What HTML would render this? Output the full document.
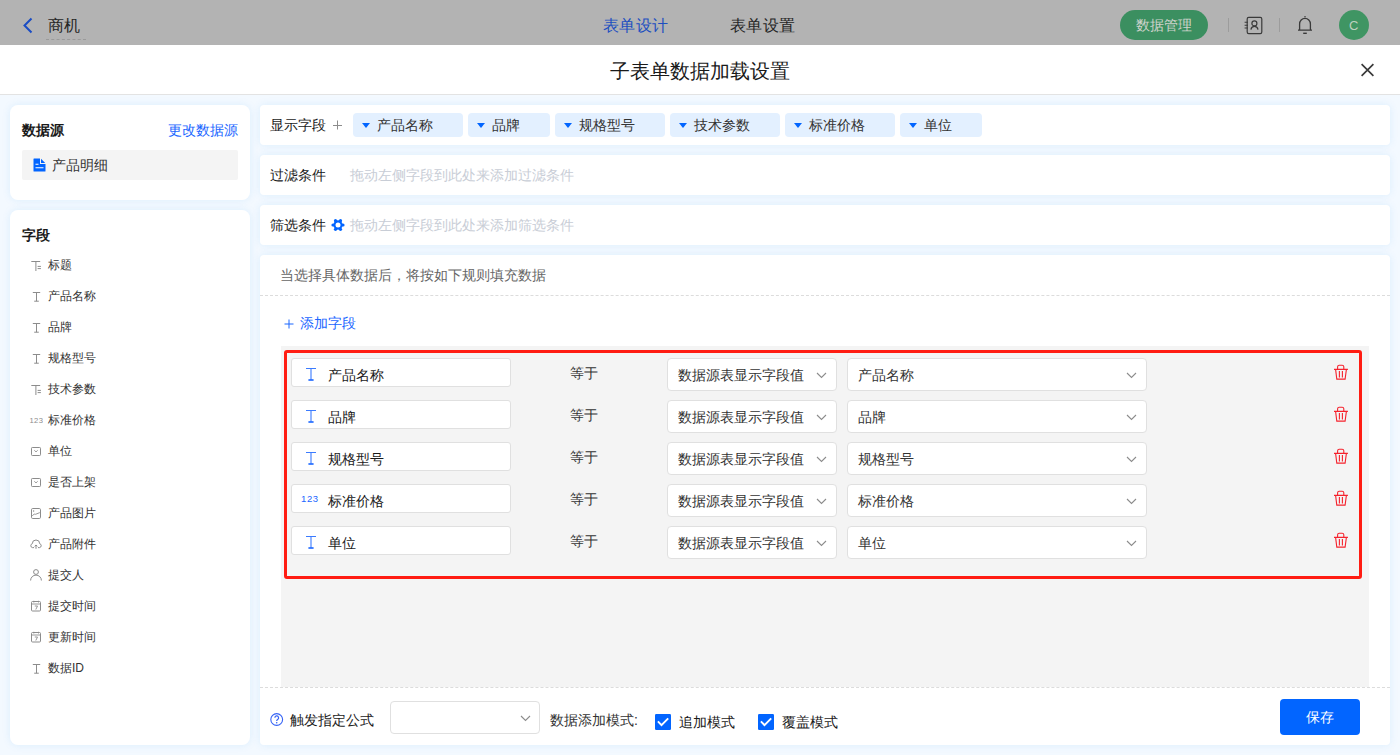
<!DOCTYPE html>
<html><head><meta charset="utf-8">
<style>
*{box-sizing:border-box;margin:0;padding:0}
html,body{width:1400px;height:755px;overflow:hidden;background:#f3f9ff;font-family:"Liberation Sans",sans-serif;color:#333;font-size:14px}
.abs{position:absolute}
.t{position:absolute;white-space:nowrap;line-height:1}
/* header */
#hdr{position:absolute;left:0;top:0;width:1400px;height:45px;background:#b3b3b3}
#mhdr{position:absolute;left:0;top:45px;width:1400px;height:50px;background:#fff;border-bottom:1px solid #e3e3e3}
.card{position:absolute;background:#fff;border-radius:8px;box-shadow:0 0 8px rgba(20,140,240,0.10)}
.rcard{position:absolute;background:#fff;border-radius:4px;box-shadow:0 0 8px rgba(20,140,240,0.10)}
.fi{position:absolute;left:0;height:20px;width:220px}
.fi svg{position:absolute;left:0;top:0}
.fi span{position:absolute;left:16px;top:4px;font-size:12px;line-height:12px;color:#333}
.tag{position:absolute;top:113px;height:24px;background:#e3f0ff;border-radius:4px}
.tag i{position:absolute;left:8.5px;top:10px;width:0;height:0;border-left:4px solid transparent;border-right:4px solid transparent;border-top:5px solid #0265ff}
.tag span{position:absolute;left:24px;top:5px;font-size:14px;line-height:14px;color:#333}
.inp{position:absolute;left:291px;width:220px;height:29px;background:#fff;border:1px solid #e0e0e0;border-radius:3px}
.sel{position:absolute;height:33px;background:#fff;border:1px solid #e0e0e0;border-radius:4px}
.sel span{position:absolute;left:10px;top:9px;font-size:14px;line-height:14px;color:#333}
.sel svg{position:absolute;top:13px}
.eq{position:absolute;left:570px;font-size:14px;line-height:14px;color:#333}
</style></head><body>
<div id="hdr">
  <svg class="abs" style="left:22px;top:17px" width="12" height="17" viewBox="0 0 12 17"><path d="M9.5 1.5 L2.5 8.5 L9.5 15.5" fill="none" stroke="#1a4cc4" stroke-width="2"/></svg>
  <div class="t" style="left:48px;top:18px;font-size:16px;color:#262626">商机</div>
  <div class="abs" style="left:46px;top:39px;width:40px;border-top:1px dashed #9a9a9a"></div>
  <div class="t" style="left:603px;top:18px;font-size:16px;letter-spacing:0.4px;color:#1d4fc0">表单设计</div>
  <div class="t" style="left:730px;top:18px;font-size:16px;letter-spacing:0.4px;color:#262626">表单设置</div>
  <div class="abs" style="left:1120px;top:10px;width:88px;height:30px;border-radius:15px;background:#3b8f60"></div>
  <div class="t" style="left:1136px;top:18px;font-size:14px;color:#cfd3cc">数据管理</div>
  <div class="abs" style="left:1228px;top:18px;width:1px;height:14px;background:#9c9c9c"></div>
  <div class="abs" style="left:1279px;top:18px;width:1px;height:14px;background:#9c9c9c"></div>
  <svg class="abs" style="left:1244px;top:16px" width="20" height="19" viewBox="0 0 20 19"><rect x="3.2" y="1.4" width="14.6" height="16.2" rx="1.6" stroke="#3a3a3a" stroke-width="1.2" fill="none"/><path d="M0.6 6.3H4M0.6 9.2H4M0.6 12H4" stroke="#3a3a3a" stroke-width="1.1"/><circle cx="10.4" cy="7.4" r="2.5" stroke="#3a3a3a" stroke-width="1.2" fill="none"/><path d="M6.9 13.6A3.6 3.8 0 0 1 14 13.6" stroke="#3a3a3a" stroke-width="1.2" fill="none"/></svg>
  <svg class="abs" style="left:1296px;top:15px" width="18" height="20" viewBox="0 0 18 20"><path d="M9 1.3V2.3" stroke="#3a3a3a" stroke-width="1.6"/><path d="M2 15.2H16M3.6 15.2V9A5.4 5.6 0 0 1 14.4 9V15.2" stroke="#3a3a3a" stroke-width="1.3" fill="none"/><path d="M7.2 18.3H10.8" stroke="#3a3a3a" stroke-width="1.4"/></svg>
  <div class="abs" style="left:1339px;top:10px;width:30px;height:30px;border-radius:15px;background:#3f9563"></div>
  <div class="t" style="left:1349px;top:19px;font-size:13px;color:#bcd0bf">C</div>
</div>
<div id="mhdr">
  <div class="t" style="left:610px;top:16px;font-size:20px;color:#1a1a1a">子表单数据加载设置</div>
  
</div>
<svg class="abs" style="left:1360px;top:63px" width="15" height="14" viewBox="0 0 15 14"><path d="M1.6 1.2 L13.4 12.8 M13.4 1.2 L1.6 12.8" stroke="#3a3a3a" stroke-width="1.7" fill="none"/></svg>

<!-- left cards -->
<div class="card" style="left:10px;top:105px;width:240px;height:95px"></div>
<div class="t" style="left:22px;top:123px;font-size:14px;font-weight:bold;color:#1a1a1a">数据源</div>
<div class="t" style="left:168px;top:123px;font-size:14px;color:#1a66ff">更改数据源</div>
<div class="abs" style="left:22px;top:150px;width:216px;height:30px;background:#f4f4f4;border-radius:2px"></div>
<div class="t" style="left:52px;top:158px;font-size:14px;color:#333">产品明细</div>

<div class="card" style="left:10px;top:210px;width:240px;height:535px"></div>
<div class="t" style="left:22px;top:228px;font-size:14px;font-weight:bold;color:#1a1a1a">字段</div>
<!--FIELDS-->
<svg class="abs" style="left:29px;top:258px" width="14" height="14" viewBox="0 0 14 14"><path d="M2.3 3.5H11.2M6.9 3.5V13M8.6 8.4H11.9M8.6 10.6H11.9" stroke="#8c8c8c" stroke-width="1" fill="none"/></svg>
<div class="t" style="left:48px;top:259px;font-size:12px;color:#333">标题</div>
<svg class="abs" style="left:29px;top:289px" width="14" height="14" viewBox="0 0 14 14"><path d="M3.8 3.5H11.2M7.5 3.5V12.2M5.2 12.2H9.8" stroke="#8c8c8c" stroke-width="1" fill="none"/></svg>
<div class="t" style="left:48px;top:290px;font-size:12px;color:#333">产品名称</div>
<svg class="abs" style="left:29px;top:320px" width="14" height="14" viewBox="0 0 14 14"><path d="M3.8 3.5H11.2M7.5 3.5V12.2M5.2 12.2H9.8" stroke="#8c8c8c" stroke-width="1" fill="none"/></svg>
<div class="t" style="left:48px;top:321px;font-size:12px;color:#333">品牌</div>
<svg class="abs" style="left:29px;top:351px" width="14" height="14" viewBox="0 0 14 14"><path d="M3.8 3.5H11.2M7.5 3.5V12.2M5.2 12.2H9.8" stroke="#8c8c8c" stroke-width="1" fill="none"/></svg>
<div class="t" style="left:48px;top:352px;font-size:12px;color:#333">规格型号</div>
<svg class="abs" style="left:29px;top:382px" width="14" height="14" viewBox="0 0 14 14"><path d="M2.3 3.5H11.2M6.9 3.5V13M8.6 8.4H11.9M8.6 10.6H11.9" stroke="#8c8c8c" stroke-width="1" fill="none"/></svg>
<div class="t" style="left:48px;top:383px;font-size:12px;color:#333">技术参数</div>
<svg class="abs" style="left:29px;top:413px" width="14" height="14" viewBox="0 0 14 14"><text x="0.6" y="10" font-size="7.6" font-family="Liberation Sans" fill="#8c8c8c" letter-spacing="0.3">123</text></svg>
<div class="t" style="left:48px;top:414px;font-size:12px;color:#333">标准价格</div>
<svg class="abs" style="left:29px;top:444px" width="14" height="14" viewBox="0 0 14 14"><rect x="2.5" y="3.5" width="9" height="8" rx="0.8" stroke="#8c8c8c" stroke-width="1" fill="none"/><path d="M5.3 6.3L7 7.9 8.7 6.3" stroke="#8c8c8c" stroke-width="0.9" fill="none"/></svg>
<div class="t" style="left:48px;top:445px;font-size:12px;color:#333">单位</div>
<svg class="abs" style="left:29px;top:475px" width="14" height="14" viewBox="0 0 14 14"><rect x="2.5" y="3.5" width="9" height="8" rx="0.8" stroke="#8c8c8c" stroke-width="1" fill="none"/><path d="M5.3 6.3L7 7.9 8.7 6.3" stroke="#8c8c8c" stroke-width="0.9" fill="none"/></svg>
<div class="t" style="left:48px;top:476px;font-size:12px;color:#333">是否上架</div>
<svg class="abs" style="left:29px;top:506px" width="14" height="14" viewBox="0 0 14 14"><rect x="2.5" y="2.5" width="9" height="10" rx="1.2" stroke="#8c8c8c" stroke-width="1" fill="none"/><path d="M3.2 10L5.2 8 6.6 8.3 10.8 6.6" stroke="#8c8c8c" stroke-width="0.9" fill="none"/><circle cx="4.6" cy="5" r="0.7" fill="#8c8c8c"/></svg>
<div class="t" style="left:48px;top:507px;font-size:12px;color:#333">产品图片</div>
<svg class="abs" style="left:29px;top:537px" width="14" height="14" viewBox="0 0 14 14"><path d="M5 10.6H3.4A2 2 0 0 1 3.3 6.7 A3.7 3.7 0 0 1 10.7 6.7 A2 2 0 0 1 10.6 10.6H9M7 8V11.8M5.6 9.3L7 8 8.4 9.3" stroke="#8c8c8c" stroke-width="1" fill="none"/></svg>
<div class="t" style="left:48px;top:538px;font-size:12px;color:#333">产品附件</div>
<svg class="abs" style="left:29px;top:568px" width="14" height="14" viewBox="0 0 14 14"><circle cx="7" cy="4" r="2.4" stroke="#8c8c8c" stroke-width="1" fill="none"/><path d="M1.6 12.5A5.4 5.4 0 0 1 12.4 12.5" stroke="#8c8c8c" stroke-width="1" fill="none"/></svg>
<div class="t" style="left:48px;top:569px;font-size:12px;color:#333">提交人</div>
<svg class="abs" style="left:29px;top:599px" width="14" height="14" viewBox="0 0 14 14"><rect x="2.5" y="2.5" width="9" height="9.5" rx="1" stroke="#8c8c8c" stroke-width="1" fill="none"/><path d="M2.5 5H11.9M4.8 1.8V3.5M9.5 1.8V3.5M5.8 7H8.5L6.8 10.5" stroke="#8c8c8c" stroke-width="0.9" fill="none"/></svg>
<div class="t" style="left:48px;top:600px;font-size:12px;color:#333">提交时间</div>
<svg class="abs" style="left:29px;top:630px" width="14" height="14" viewBox="0 0 14 14"><rect x="2.5" y="2.5" width="9" height="9.5" rx="1" stroke="#8c8c8c" stroke-width="1" fill="none"/><path d="M2.5 5H11.9M4.8 1.8V3.5M9.5 1.8V3.5M5.8 7H8.5L6.8 10.5" stroke="#8c8c8c" stroke-width="0.9" fill="none"/></svg>
<div class="t" style="left:48px;top:631px;font-size:12px;color:#333">更新时间</div>
<svg class="abs" style="left:29px;top:661px" width="14" height="14" viewBox="0 0 14 14"><path d="M3.8 3.5H11.2M7.5 3.5V12.2M5.2 12.2H9.8" stroke="#8c8c8c" stroke-width="1" fill="none"/></svg>
<div class="t" style="left:48px;top:662px;font-size:12px;color:#333">数据ID</div>
<!--/FIELDS-->

<!-- right rows -->
<div class="rcard" style="left:260px;top:105px;width:1130px;height:40px"></div>
<div class="t" style="left:270px;top:118px;font-size:14px;color:#1a1a1a">显示字段</div>
<div class="rcard" style="left:260px;top:155px;width:1130px;height:40px"></div>
<div class="t" style="left:270px;top:168px;font-size:14px;color:#1a1a1a">过滤条件</div>
<div class="t" style="left:350px;top:168px;font-size:14px;color:#c8cdd6">拖动左侧字段到此处来添加过滤条件</div>
<div class="rcard" style="left:260px;top:205px;width:1130px;height:40px"></div>
<div class="t" style="left:270px;top:218px;font-size:14px;color:#1a1a1a">筛选条件</div>
<div class="t" style="left:350px;top:218px;font-size:14px;color:#c8cdd6">拖动左侧字段到此处来添加筛选条件</div>

<div class="rcard" style="left:260px;top:255px;width:1130px;height:490px"></div>
<div class="t" style="left:280px;top:268px;font-size:14px;color:#666">当选择具体数据后，将按如下规则填充数据</div>
<div class="abs" style="left:260px;top:295px;width:1130px;border-top:1px dashed #dcdcdc"></div>
<div class="t" style="left:300px;top:316px;font-size:14px;color:#1a66ff">添加字段</div>
<div class="abs" style="left:281px;top:346px;width:1088px;height:341px;background:#f4f4f4"></div>
<div class="abs" style="left:284px;top:350px;width:1078px;height:229px;border:3px solid #ff1c12;border-radius:3px"></div>
<div class="abs" style="left:260px;top:687px;width:1130px;border-top:1px dashed #dcdcdc"></div>

<svg class="abs" style="left:331px;top:119px" width="12" height="12" viewBox="0 0 12 12"><path d="M6.5 1.5V10.5M2 6.5H11" stroke="#8c8c8c" stroke-width="1" fill="none"/></svg>
<div class="tag" style="left:353px;width:110px"><i></i><span>产品名称</span></div>
<div class="tag" style="left:468px;width:82px"><i></i><span>品牌</span></div>
<div class="tag" style="left:555px;width:110px"><i></i><span>规格型号</span></div>
<div class="tag" style="left:670px;width:110px"><i></i><span>技术参数</span></div>
<div class="tag" style="left:785px;width:110px"><i></i><span>标准价格</span></div>
<div class="tag" style="left:900px;width:82px"><i></i><span>单位</span></div>
<svg class="abs" style="left:331px;top:218px" width="14" height="14" viewBox="0 0 14 14"><circle cx="7" cy="7" r="4.7" fill="#0265ff"/><circle cx="12.00" cy="7.00" r="1.6" fill="#0265ff"/><circle cx="9.50" cy="11.33" r="1.6" fill="#0265ff"/><circle cx="4.50" cy="11.33" r="1.6" fill="#0265ff"/><circle cx="2.00" cy="7.00" r="1.6" fill="#0265ff"/><circle cx="4.50" cy="2.67" r="1.6" fill="#0265ff"/><circle cx="9.50" cy="2.67" r="1.6" fill="#0265ff"/><circle cx="7" cy="7" r="2.5" fill="#fff"/></svg>
<svg class="abs" style="left:33px;top:158px" width="13" height="14" viewBox="0 0 13 14"><path fill="#0265ff" d="M0.5 1A0.5 0.5 0 0 1 1 0.5H7V6H12.5V13A0.5 0.5 0 0 1 12 13.5H1A0.5 0.5 0 0 1 0.5 13Z M8 0.8L12.2 5H8Z"/><path d="M2.5 6.2H5.5M2.5 9.8H10.5" stroke="#fff" stroke-width="1.1"/></svg>
<svg class="abs" style="left:282.5px;top:317.5px" width="12" height="12" viewBox="0 0 12 12"><path d="M6 1.5V10.5M1.5 6H10.5" stroke="#1a66ff" stroke-width="1" fill="none"/></svg>
<div class="inp" style="top:358px"></div>
<svg class="abs" style="left:303px;top:367px" width="14" height="14" viewBox="0 0 14 14"><path d="M3 1.5H13M8 1.5V13M5.5 13H10.5" stroke="#3b7bff" stroke-width="1.1" fill="none"/><path d="M5.5 13H10.5" stroke="#1a66ff" stroke-width="1.3"/></svg>
<div class="t" style="left:328px;top:368px;font-size:14px;color:#1a1a1a">产品名称</div>
<div class="eq" style="top:366px">等于</div>
<div class="sel" style="left:667px;top:358px;width:170px"><span>数据源表显示字段值</span><svg style="left:148px" width="11" height="7" viewBox="0 0 11 7"><path d="M1 1L5.5 5.5 10 1" stroke="#8c8c8c" stroke-width="1.1" fill="none"/></svg></div>
<div class="sel" style="left:847px;top:358px;width:300px"><span>产品名称</span><svg style="left:278px" width="11" height="7" viewBox="0 0 11 7"><path d="M1 1L5.5 5.5 10 1" stroke="#8c8c8c" stroke-width="1.1" fill="none"/></svg></div>
<svg class="abs" style="left:1333px;top:364px" width="16" height="17" viewBox="0 0 16 17"><path d="M1 5.4H14.9M4.6 5.4V2.8A1.6 1.6 0 0 1 6.2 1.3H9.2A1.6 1.6 0 0 1 10.8 2.8V5.4M2.6 5.4L3.8 15.1H12.1L13.4 5.4M6.4 7V13.6M9.4 7V13.6" stroke="#f5222d" stroke-width="1.1" fill="none"/></svg>
<div class="inp" style="top:400px"></div>
<svg class="abs" style="left:303px;top:409px" width="14" height="14" viewBox="0 0 14 14"><path d="M3 1.5H13M8 1.5V13M5.5 13H10.5" stroke="#3b7bff" stroke-width="1.1" fill="none"/><path d="M5.5 13H10.5" stroke="#1a66ff" stroke-width="1.3"/></svg>
<div class="t" style="left:328px;top:410px;font-size:14px;color:#1a1a1a">品牌</div>
<div class="eq" style="top:408px">等于</div>
<div class="sel" style="left:667px;top:400px;width:170px"><span>数据源表显示字段值</span><svg style="left:148px" width="11" height="7" viewBox="0 0 11 7"><path d="M1 1L5.5 5.5 10 1" stroke="#8c8c8c" stroke-width="1.1" fill="none"/></svg></div>
<div class="sel" style="left:847px;top:400px;width:300px"><span>品牌</span><svg style="left:278px" width="11" height="7" viewBox="0 0 11 7"><path d="M1 1L5.5 5.5 10 1" stroke="#8c8c8c" stroke-width="1.1" fill="none"/></svg></div>
<svg class="abs" style="left:1333px;top:406px" width="16" height="17" viewBox="0 0 16 17"><path d="M1 5.4H14.9M4.6 5.4V2.8A1.6 1.6 0 0 1 6.2 1.3H9.2A1.6 1.6 0 0 1 10.8 2.8V5.4M2.6 5.4L3.8 15.1H12.1L13.4 5.4M6.4 7V13.6M9.4 7V13.6" stroke="#f5222d" stroke-width="1.1" fill="none"/></svg>
<div class="inp" style="top:442px"></div>
<svg class="abs" style="left:303px;top:451px" width="14" height="14" viewBox="0 0 14 14"><path d="M3 1.5H13M8 1.5V13M5.5 13H10.5" stroke="#3b7bff" stroke-width="1.1" fill="none"/><path d="M5.5 13H10.5" stroke="#1a66ff" stroke-width="1.3"/></svg>
<div class="t" style="left:328px;top:452px;font-size:14px;color:#1a1a1a">规格型号</div>
<div class="eq" style="top:450px">等于</div>
<div class="sel" style="left:667px;top:442px;width:170px"><span>数据源表显示字段值</span><svg style="left:148px" width="11" height="7" viewBox="0 0 11 7"><path d="M1 1L5.5 5.5 10 1" stroke="#8c8c8c" stroke-width="1.1" fill="none"/></svg></div>
<div class="sel" style="left:847px;top:442px;width:300px"><span>规格型号</span><svg style="left:278px" width="11" height="7" viewBox="0 0 11 7"><path d="M1 1L5.5 5.5 10 1" stroke="#8c8c8c" stroke-width="1.1" fill="none"/></svg></div>
<svg class="abs" style="left:1333px;top:448px" width="16" height="17" viewBox="0 0 16 17"><path d="M1 5.4H14.9M4.6 5.4V2.8A1.6 1.6 0 0 1 6.2 1.3H9.2A1.6 1.6 0 0 1 10.8 2.8V5.4M2.6 5.4L3.8 15.1H12.1L13.4 5.4M6.4 7V13.6M9.4 7V13.6" stroke="#f5222d" stroke-width="1.1" fill="none"/></svg>
<div class="inp" style="top:484px"></div>
<div class="t" style="left:301px;top:493.5px;font-size:9.5px;color:#1a66ff;letter-spacing:0.6px">123</div>
<div class="t" style="left:328px;top:494px;font-size:14px;color:#1a1a1a">标准价格</div>
<div class="eq" style="top:492px">等于</div>
<div class="sel" style="left:667px;top:484px;width:170px"><span>数据源表显示字段值</span><svg style="left:148px" width="11" height="7" viewBox="0 0 11 7"><path d="M1 1L5.5 5.5 10 1" stroke="#8c8c8c" stroke-width="1.1" fill="none"/></svg></div>
<div class="sel" style="left:847px;top:484px;width:300px"><span>标准价格</span><svg style="left:278px" width="11" height="7" viewBox="0 0 11 7"><path d="M1 1L5.5 5.5 10 1" stroke="#8c8c8c" stroke-width="1.1" fill="none"/></svg></div>
<svg class="abs" style="left:1333px;top:490px" width="16" height="17" viewBox="0 0 16 17"><path d="M1 5.4H14.9M4.6 5.4V2.8A1.6 1.6 0 0 1 6.2 1.3H9.2A1.6 1.6 0 0 1 10.8 2.8V5.4M2.6 5.4L3.8 15.1H12.1L13.4 5.4M6.4 7V13.6M9.4 7V13.6" stroke="#f5222d" stroke-width="1.1" fill="none"/></svg>
<div class="inp" style="top:526px"></div>
<svg class="abs" style="left:303px;top:535px" width="14" height="14" viewBox="0 0 14 14"><path d="M3 1.5H13M8 1.5V13M5.5 13H10.5" stroke="#3b7bff" stroke-width="1.1" fill="none"/><path d="M5.5 13H10.5" stroke="#1a66ff" stroke-width="1.3"/></svg>
<div class="t" style="left:328px;top:536px;font-size:14px;color:#1a1a1a">单位</div>
<div class="eq" style="top:534px">等于</div>
<div class="sel" style="left:667px;top:526px;width:170px"><span>数据源表显示字段值</span><svg style="left:148px" width="11" height="7" viewBox="0 0 11 7"><path d="M1 1L5.5 5.5 10 1" stroke="#8c8c8c" stroke-width="1.1" fill="none"/></svg></div>
<div class="sel" style="left:847px;top:526px;width:300px"><span>单位</span><svg style="left:278px" width="11" height="7" viewBox="0 0 11 7"><path d="M1 1L5.5 5.5 10 1" stroke="#8c8c8c" stroke-width="1.1" fill="none"/></svg></div>
<svg class="abs" style="left:1333px;top:532px" width="16" height="17" viewBox="0 0 16 17"><path d="M1 5.4H14.9M4.6 5.4V2.8A1.6 1.6 0 0 1 6.2 1.3H9.2A1.6 1.6 0 0 1 10.8 2.8V5.4M2.6 5.4L3.8 15.1H12.1L13.4 5.4M6.4 7V13.6M9.4 7V13.6" stroke="#f5222d" stroke-width="1.1" fill="none"/></svg>
<svg class="abs" style="left:270.2px;top:713px" width="14" height="14" viewBox="0 0 14 14"><circle cx="6.7" cy="6.5" r="5.9" stroke="#3563f5" stroke-width="1.1" fill="none"/><path d="M4.9 4.8A1.85 1.85 0 1 1 7.5 6.5C6.9 6.9 6.7 7.2 6.7 8.1" stroke="#3563f5" stroke-width="1.25" fill="none"/><circle cx="6.7" cy="9.7" r="0.8" fill="#3563f5"/></svg>
<div class="t" style="left:290px;top:713px;font-size:14px;color:#1a1a1a">触发指定公式</div>
<div class="sel" style="left:390px;top:701px;width:150px;height:33px"><svg style="left:129px" width="11" height="7" viewBox="0 0 11 7"><path d="M1 1L5.5 5.5 10 1" stroke="#8c8c8c" stroke-width="1.1" fill="none"/></svg></div>
<div class="t" style="left:550px;top:713px;font-size:14px;color:#333">数据添加模式:</div>
<svg class="abs" style="left:655px;top:714px" width="16" height="16" viewBox="0 0 16 16"><rect width="16" height="16" rx="1.2" fill="#0265ff"/><path d="M2.9 7.3L6.5 11.2 13.2 4.3" stroke="#fff" stroke-width="1.9" fill="none"/></svg>
<div class="t" style="left:679px;top:715px;font-size:14px;color:#1a1a1a">追加模式</div>
<svg class="abs" style="left:758px;top:714px" width="16" height="16" viewBox="0 0 16 16"><rect width="16" height="16" rx="1.2" fill="#0265ff"/><path d="M2.9 7.3L6.5 11.2 13.2 4.3" stroke="#fff" stroke-width="1.9" fill="none"/></svg>
<div class="t" style="left:782px;top:715px;font-size:14px;color:#1a1a1a">覆盖模式</div>
<div class="abs" style="left:1280px;top:699px;width:80px;height:36px;background:#0265ff;border-radius:4px"></div>
<div class="t" style="left:1306px;top:710px;font-size:14px;color:#fff">保存</div>
</body></html>
